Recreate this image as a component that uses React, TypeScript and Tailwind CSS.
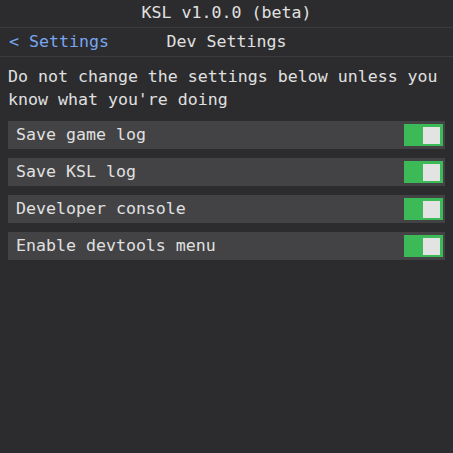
import { useState } from 'react';

const mono = { fontFamily: '"DejaVu Sans Mono", "Liberation Mono", monospace' };

function Toggle({ on, onChange }: { on: boolean; onChange: () => void }) {
  return (
    <button
      onClick={onChange}
      className={`flex h-[22px] w-[39px] items-center p-[3px] ${on ? 'justify-end bg-[#3cba57]' : 'justify-start bg-[#5a5a5c]'}`}
    >
      <span className="block h-[17px] w-[17px] bg-[#e3e3e3]" />
    </button>
  );
}

export default function App() {
  const [opts, setOpts] = useState([
    { label: 'Save game log', on: true },
    { label: 'Save KSL log', on: true },
    { label: 'Developer console', on: true },
    { label: 'Enable devtools menu', on: true },
  ]);

  return (
    <div className="h-[453px] w-[453px] overflow-hidden bg-[#2c2c2e] text-[16.6px] text-[#e0e0e0]" style={mono}>
      {/* title bar */}
      <div className="flex h-[28px] items-center justify-center border-b border-[#3c3c3e] leading-none">
        KSL v1.0.0 (beta)
      </div>

      {/* nav */}
      <div className="grid h-[29px] grid-cols-[1fr_auto_1fr] items-center border-b border-[#3c3c3e] px-[9px] leading-none">
        <button className="justify-self-start text-[#78a6ee]">&lt; Settings</button>
        <span>Dev Settings</span>
        <span />
      </div>

      <div className="px-[8px] pt-[8px]">
        <p className="leading-[23px]">Do not change the settings below unless you know what you're doing</p>

        <div className="mt-[10px] flex flex-col gap-[9px]">
          {opts.map((o, i) => (
            <div key={o.label} className="flex h-[28px] items-center justify-between bg-[#434345] pl-[8px] pr-[2px]">
              <span className="leading-none">{o.label}</span>
              <Toggle
                on={o.on}
                onChange={() => setOpts(prev => prev.map((p, j) => (j === i ? { ...p, on: !p.on } : p)))}
              />
            </div>
          ))}
        </div>
      </div>
    </div>
  );
}
